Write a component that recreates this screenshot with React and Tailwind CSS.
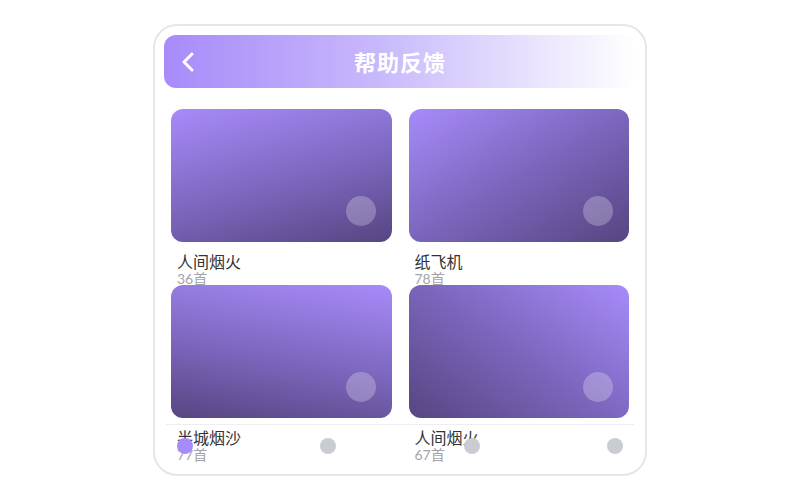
import React from 'react';

const songs = [
    { title: '人间烟火', count: '36首', bg: 'bg-[linear-gradient(165deg,#a78bfa_0%,#7c66bd_55%,#574582_100%)]' },
    { title: '纸飞机', count: '78首', bg: 'bg-[linear-gradient(150deg,#a78bfa_0%,#7c66bd_50%,#574582_100%)]' },
    { title: '半城烟沙', count: '77首', bg: 'bg-[linear-gradient(190deg,#a78bfa_0%,#7c66bd_55%,#574582_100%)]' },
    { title: '人间烟火', count: '67首', bg: 'bg-[linear-gradient(215deg,#a78bfa_0%,#7c66bd_50%,#574582_100%)]' },
];

function SongCard({ song }) {
    return (
        <div>
            <div className={`relative h-[133px] rounded-[12px] ${song.bg}`}>
                <div className="absolute right-[16px] bottom-[16px] w-[30px] h-[30px] rounded-full bg-white/25" />
            </div>
            <div className="pl-[6px] mt-[10px] text-[16px] leading-[20px] text-[#333]">{song.title}</div>
            <div className="pl-[6px] text-[14px] leading-[13px] text-[#a3a3ab]">{song.count}</div>
        </div>
    );
}

export default function App() {
    return (
        <div className="w-[800px] h-[500px] flex items-center justify-center bg-white font-['Lato','Noto_Sans_CJK_SC',sans-serif]">
            <div className="relative w-[494px] h-[452px] rounded-[24px] border-2 border-[#e6e6ea] p-[9px] overflow-hidden">
                <div className="relative h-[53px] rounded-[12px] bg-[linear-gradient(90deg,#a78bfa_0%,#c8b8fb_45%,#ffffff_100%)] flex items-center justify-center">
                    <svg className="absolute left-[17px] top-[17px]" width="14" height="20" viewBox="0 0 14 20">
                        <polyline points="11,2 3,10 11,18" fill="none" stroke="white" strokeWidth="3" strokeLinecap="round" strokeLinejoin="round" />
                    </svg>
                    <h1 className="text-white text-[22px] font-bold tracking-[1px] font-['Noto_Sans_CJK_SC',sans-serif]">帮助反馈</h1>
                </div>
                <div className="grid grid-cols-2 gap-x-[17px] px-[7px] mt-[21px]">
                    {songs.map((song, i) => (
                        <SongCard key={i} song={song} />
                    ))}
                </div>
                <div className="absolute left-[11px] right-[11px] top-[398px] h-[42px] border-t border-[#eeeef0] px-[11px] flex items-center justify-between">
                    <div className="w-[16px] h-[16px] rounded-full bg-[#a78bfa]" />
                    <div className="w-[16px] h-[16px] rounded-full bg-[#c9cdd3]" />
                    <div className="w-[16px] h-[16px] rounded-full bg-[#c9cdd3]" />
                    <div className="w-[16px] h-[16px] rounded-full bg-[#c9cdd3]" />
                </div>
            </div>
        </div>
    );
}
